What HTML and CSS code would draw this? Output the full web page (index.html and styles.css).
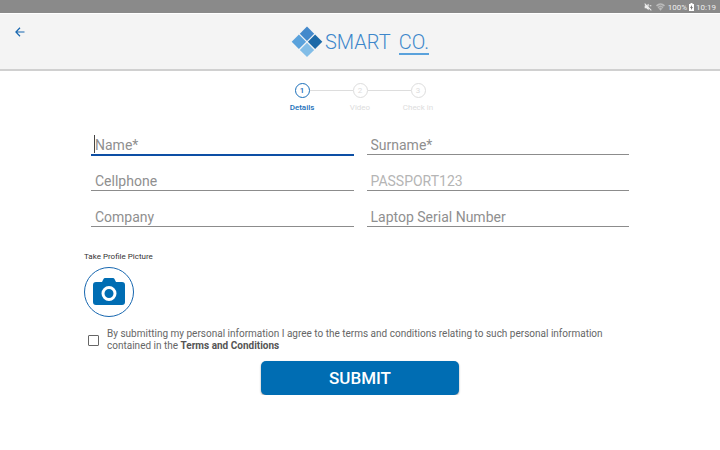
FILE: index.html
```
<!DOCTYPE html>
<html lang="en">
<head>
  <meta charset="UTF-8">
  <title>Smart Co. Check in</title>
  <link rel="stylesheet" href="styles.css">
</head>
<body>
  <div class="status-bar">
    <svg class="icon-mute" width="8" height="8" viewBox="0 0 24 24"><path fill="#eee" d="M2 8v8h5l7 6v-6L5 6zM14 2 9 6l5 5zM3 1 1 3l20 20 2-2zM17 7v3h5V7z"/></svg>
    <svg class="icon-wifi" width="9" height="8" viewBox="0 0 24 20"><path fill="#bbb" d="M12 20 0 5a19 19 0 0 1 24 0z"/><path fill="none" stroke="#8a8a8a" stroke-width="2" d="M3 9a14 14 0 0 1 18 0M7 13a8 8 0 0 1 10 0"/></svg>
    <span>100%</span>
    <svg width="5" height="8" viewBox="0 0 10 16"><path fill="#fff" d="M3 0h4v2h3v14H0V2h3z"/><path fill="#777" d="M6 4 2 10h2v4l4-6H6z"/></svg>
    <span>10:19</span>
  </div>

  <header class="header">
    <button class="back-button" type="button" aria-label="Back">
      <svg width="10" height="10" viewBox="0 0 20 20" fill="none" stroke="#1767b0" stroke-width="2.4"><path d="M19 10H2M10 1.5 1.800 10l8.200 8.500"/></svg>
    </button>
    <div class="logo">
      <svg width="32" height="32" viewBox="0 0 32 32">
        <path fill="#4489cb" d="M16 .5 23.200 7.700 16 14.900 8.800 7.700z"/>
        <path fill="#5aa2dc" d="M7.900 8.600 15.100 15.800 7.900 23 .7 15.800z"/>
        <path fill="#1b69a8" d="M24.100 8.600 31.300 15.800 24.100 23 16.900 15.800z"/>
        <path fill="#82bde7" d="M16 16.700 23.200 23.900 16 31.100 8.800 23.900z"/>
      </svg>
      <span class="logo-text">SMART</span>
      <span class="logo-text logo-co">CO.</span>
    </div>
  </header>

  <main>
    <ol class="steps">
      <li class="step active"><span class="step-number">1</span>Details</li>
      <li class="step"><span class="step-number">2</span>Video</li>
      <li class="step"><span class="step-number">3</span>Check in</li>
    </ol>

    <form class="form">
      <div class="fields">
        <div class="field focused">
          <input type="text" id="name" placeholder="Name*" aria-label="Name">
          <span class="caret"></span>
        </div>
        <div class="field">
          <input type="text" id="surname" placeholder="Surname*" aria-label="Surname">
        </div>
        <div class="field">
          <input type="tel" id="cellphone" placeholder="Cellphone" aria-label="Cellphone">
        </div>
        <div class="field">
          <input type="text" id="passport" value="PASSPORT123" aria-label="Passport number" disabled>
        </div>
        <div class="field">
          <input type="text" id="company" placeholder="Company" aria-label="Company">
        </div>
        <div class="field">
          <input type="text" id="laptop" placeholder="Laptop Serial Number" aria-label="Laptop Serial Number">
        </div>
      </div>

      <div class="picture">
        <span id="pictureLabel">Take Profile Picture</span>
        <button class="camera-button" type="button" aria-labelledby="pictureLabel">
          <svg width="32" height="28" viewBox="0 0 32 28">
            <path fill="#006db3" d="M3 4h6l1.500-3q.5-1 1.500-1h8q1 0 1.500 1L23 4h6q3 0 3 3v17q0 3-3 3H3q-3 0-3-3V7q0-3 3-3z"/>
            <circle cx="16" cy="15.500" r="6" fill="none" stroke="#fff" stroke-width="3"/>
          </svg>
        </button>
      </div>

      <div class="terms">
        <input type="checkbox" id="agree">
        <label for="agree">By submitting my personal information I agree to the terms and conditions relating to such personal information contained in the <a href="#">Terms and Conditions</a></label>
      </div>

      <button class="submit-button" type="submit">SUBMIT</button>
    </form>
  </main>
</body>
</html>
```
FILE: styles.css
```
* {
  box-sizing: border-box;
}
body {
  margin: 0;
  background-color: #fff;
  font-family: Roboto, sans-serif;
  color: #666;
}
button {
  padding: 0;
  border: none;
  font-family: inherit;
  cursor: pointer;
}
.status-bar {
  display: flex;
  justify-content: flex-end;
  align-items: center;
  gap: 2px;
  height: 13px;
  padding: 1px 4px 0 0;
  background-color: #8a8a8a;
  color: #eee;
  font-size: 8px;
}
.icon-mute {
  margin-right: 2px;
}
.icon-wifi {
  margin-right: 1px;
}
.header {
  display: grid;
  grid-template-columns: 40px 1fr 40px;
  height: 58px;
  border-top: 1px solid #fff;
  border-bottom: 2px solid #d0d0d0;
  background-color: #f4f4f4;
}
.back-button {
  display: flex;
  align-items: center;
  justify-content: center;
  height: 35px;
  background: none;
}
.logo {
  display: flex;
  align-items: center;
  justify-content: center;
  gap: 2px;
}
.logo-text {
  color: #3d87cb;
  font-size: 20px;
  font-weight: 300;
  line-height: 22px;
}
.logo-co {
  margin-left: 6px;
  padding-top: 2px;
  border-bottom: 2px solid #5aa2dc;
}
.steps {
  display: flex;
  justify-content: center;
  margin: 0;
  padding: 12px 0 0;
  list-style: none;
}
.step {
  position: relative;
  display: flex;
  flex-direction: column;
  align-items: center;
  gap: 5px;
  width: 58px;
  color: #ddd;
  font-size: 8px;
  line-height: 10px;
}
.step-number {
  width: 15px;
  height: 15px;
  border: 1px solid #ddd;
  border-radius: 50%;
  line-height: 13px;
  text-align: center;
}
.step.active {
  color: #1a6fba;
  font-weight: 500;
}
.step.active .step-number {
  border-color: #1a6fba;
}
/* connector between two circles */
.step:not(:last-child)::after {
  content: "";
  position: absolute;
  top: 7px;
  left: 37px;
  width: 43px;
  height: 1px;
  background-color: #ddd;
}
.form {
  display: flex;
  flex-direction: column;
  padding: 22px 84px 0;
}
.fields {
  display: grid;
  grid-template-columns: 1fr 1fr;
  gap: 12px 13px;
  padding: 0 7px;
}
.field {
  position: relative;
  height: 24px;
}
.field input {
  display: block;
  width: 100%;
  height: 20px;
  padding: 0 4px;
  border: none;
  border-bottom: 1px solid #8c8c8c;
  border-radius: 0;
  outline: none;
  background: none;
  color: #555;
  font-family: inherit;
  font-size: 14px;
}
.field input::placeholder {
  color: #8f8f8f;
  opacity: 1;
}
.field input:disabled {
  color: #b5b5b5;
}
.focused input {
  height: 21px;
  border-bottom: 2px solid #0d4fa5;
}
.caret {
  position: absolute;
  top: 0;
  left: 3px;
  width: 1px;
  height: 18px;
  background-color: #444;
}
.picture {
  display: flex;
  flex-direction: column;
  align-items: flex-start;
  gap: 5px;
  margin-top: 21px;
  color: #333;
  font-size: 8px;
  line-height: 10px;
}
.camera-button {
  display: flex;
  align-items: center;
  justify-content: center;
  width: 50px;
  height: 50px;
  border: 1px solid #1767b0;
  border-radius: 50%;
  background-color: #fff;
}
.terms {
  display: flex;
  align-items: center;
  gap: 8px;
  margin-top: 11px;
  padding: 0 16px 0 4px;
  font-size: 10px;
  line-height: 12px;
}
.terms input {
  flex: none;
  width: 11px;
  height: 11px;
  margin: 0;
  border: 1px solid #666;
  border-radius: 1px;
  appearance: none;
}
.terms input:checked {
  background-color: #006db3;
}
.terms a {
  color: #555;
  font-weight: 700;
  text-decoration: none;
}
.submit-button {
  align-self: center;
  width: 36%;
  height: 34px;
  margin-top: 9px;
  border-radius: 5px;
  background-color: #006db3;
  box-shadow: 0 1px 2px rgba(0, 0, 0, 0.4);
  color: #fff;
  font-size: 17px;
  font-weight: 500;
}
```
